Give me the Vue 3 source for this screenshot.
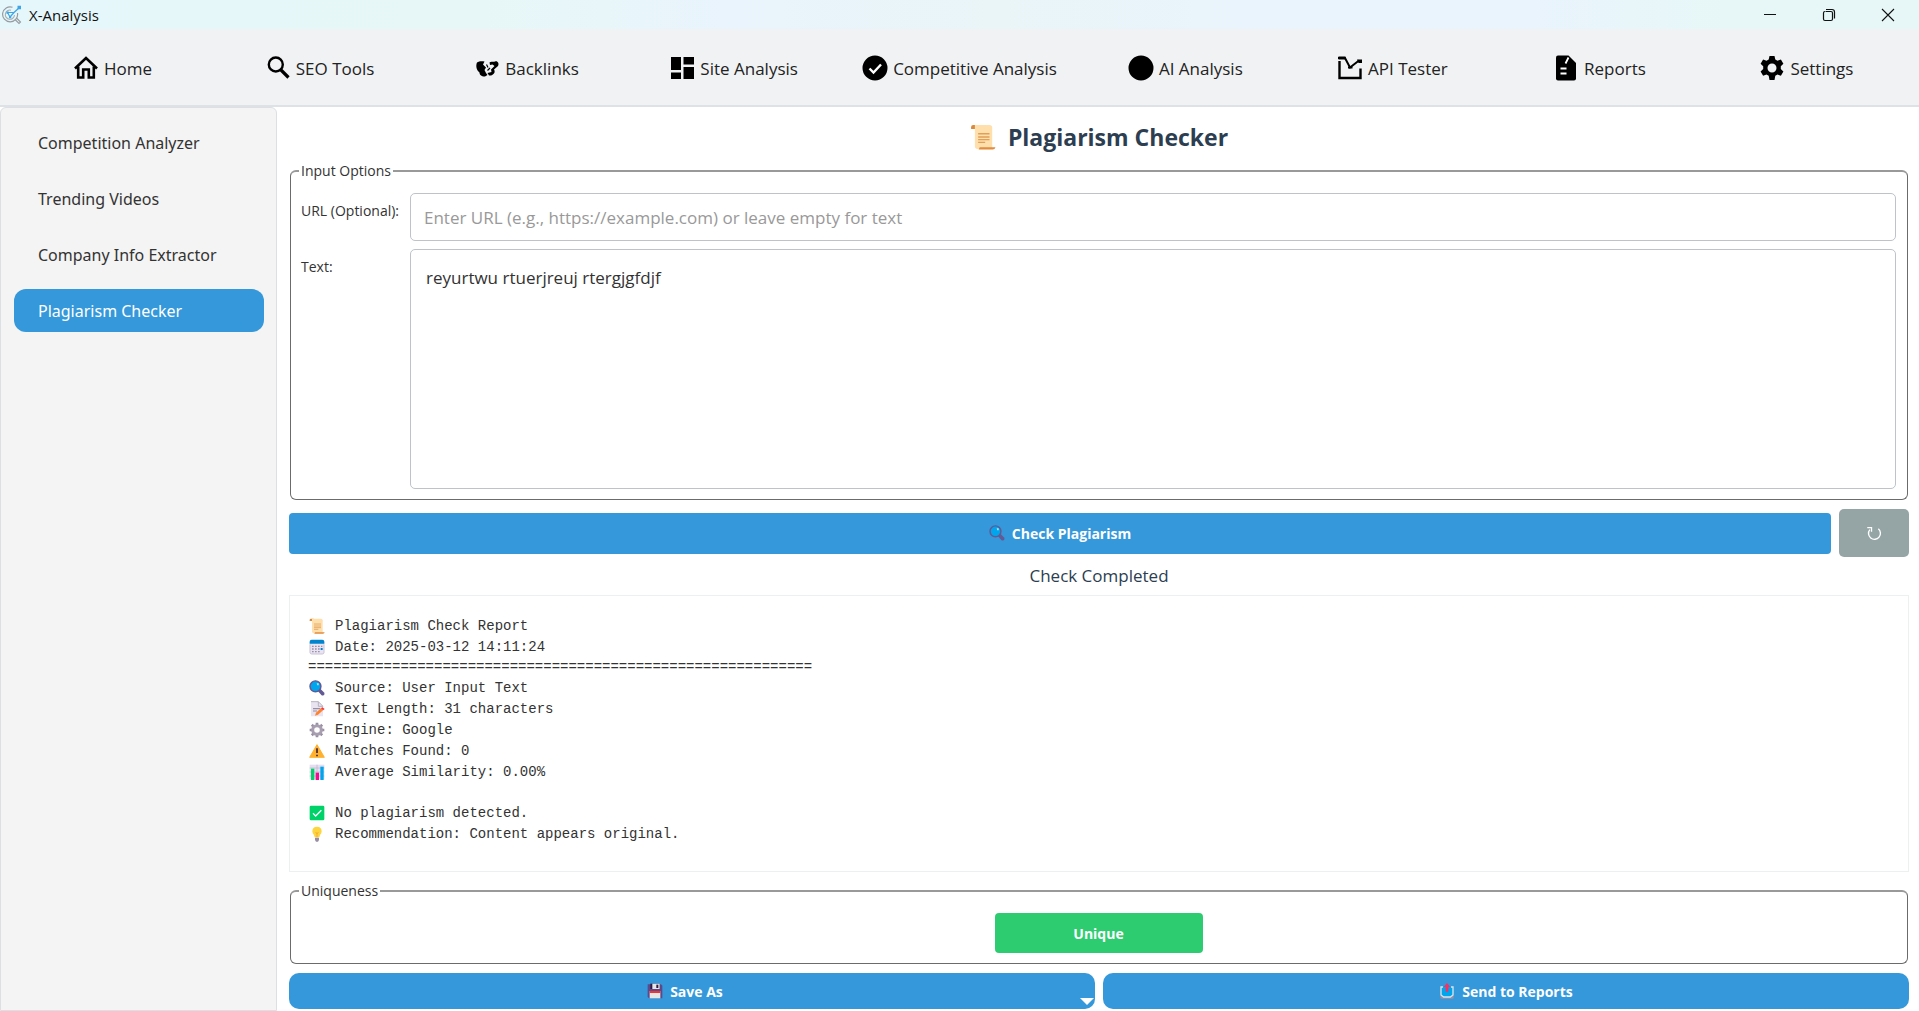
<script setup>
import { h, ref } from 'vue'

// Every glyph is a view box size and a list of painted paths.
const glyphs = {
  logo: [20, [
    { d: 'M15.500 8A7.500 7.500 0 1 1 10.500 2.200', s: '#969ca1', w: 1.200 },
    { d: 'M12.500 10A4.600 4.600 0 1 1 9 5.200', s: '#a9afb3', w: 1.100 },
    { d: 'M13 14.500L17 18.500L18.500 17L14.500 13', s: '#969ca1', w: 1.100 },
    { d: 'M5.500 7.500L8 12L12 7.500L17.500 2.500M5.500 7.500L12 7.500', s: '#3fa5e6', w: 1.200 },
    { d: 'M15.500 .8h3.500v3.500h-3.500zM4.500 6.500h2.200v2.200h-2.200zM7 11h2.200v2.200h-2.200z', f: '#3fa5e6' }
  ]],
  home: [26, [
    { d: 'M2 13.500 L13 3 L24 13.500', s: '#000', w: 2.6 },
    { d: 'M5.200 11.500V22.500H10.200V14.500H15.800V22.500H20.800V11.500', s: '#000', w: 2.6 }
  ]],
  search: [26, [
    { d: 'M17.800 9.500A7 7 0 1 1 3.800 9.500A7 7 0 1 1 17.800 9.500', s: '#000', w: 2.4 },
    { d: 'M15.500 14.500L23.500 22.500', s: '#000', w: 3.2 }
  ]],
  links: [26, [
    { d: 'M3 7.500C5 6 8 6 10.500 6.500L9 9.500L12 12.500L10.500 15L12 18L13.500 20L11 21.500C7 21.500 5.500 19.500 5.500 17.500C2.500 15 1.500 11 3 7.500Z', f: '#000' },
    { d: 'M15.500 7.500C17 6 19 7.500 21 6.500C23.500 5.500 25.500 8.500 24 11L20 14.500C22 17.500 19 21 15 20.500L13.500 18L17.500 17L17 14.500L20.500 11L18.500 9.500L16 10Z', f: '#000' },
    { d: 'M12.500 9.500L14 12.500M13.500 15.500L16 13', s: '#000', w: 1.2 }
  ]],
  grid: [26, [{ d: 'M2 2h10v13H2zM2 17.500h10v6.500H2zM14.500 2H25v7.500H14.500zM14.500 12H25v12H14.500z', f: '#000' }]],
  check: [26, [
    { d: 'M.5 13a12.500 12.500 0 1 0 25 0a12.500 12.500 0 1 0-25 0', f: '#000' },
    { d: 'M7.500 13.500L11.500 17.500L19 9.500', s: '#fff', w: 2.4 }
  ]],
  dot: [26, [{ d: 'M.5 13a12.500 12.500 0 1 0 25 0a12.500 12.500 0 1 0-25 0', f: '#000' }]],
  api: [26, [
    { d: 'M2.500 6V23H23.500V13.500', s: '#000', w: 2.4 },
    { d: 'M1 3H8L13 12.500L22 5.500', s: '#000', w: 2 },
    { d: 'M1.500 1.500h7v3h-7zM20 4.500h5v3.500h-3.500z', f: '#000' },
    { d: 'M11 12.500h4.500', s: '#000', w: 2 }
  ]],
  file: [26, [
    { d: 'M5 .5H15.500L23 8V23.500Q23 25.500 21 25.500H5Q3 25.500 3 23.500V2.500Q3 .5 5 .5Z', f: '#000' },
    { d: 'M15.500 2.500L12.500 8.500M7.500 13.500h6M7.500 18.500h6', s: '#fff', w: 1.800 }
  ]],
  gear: [26, [
    { d: 'M10.500 1h5l.8 3.400 2.200 1.300 3.400-1.200 2.500 4.300-2.600 2.500v2.600l2.600 2.500-2.500 4.300-3.400-1.200-2.200 1.300-.8 4.200h-5l-.8-4.200-2.200-1.300-3.400 1.200-2.500-4.300 2.600-2.500v-2.600l-2.600-2.500 2.500-4.300 3.400 1.200 2.200-1.300z', f: '#000' },
    { d: 'M8.500 13a4.500 4.500 0 1 0 9 0a4.500 4.500 0 1 0-9 0', f: '#f1f2f4' }
  ]],
  scroll: [24, [
    { d: 'M1 3Q1 1 3 1H7V4.500H1Z', f: '#d88a3c' },
    { d: 'M4.500 1H18Q20.500 1 20.500 3.500V23H7Q4.500 23 4.500 20Z', f: '#ffdfab' },
    { d: 'M9 21.500H23.500Q23 23.500 21 23.500H8Z', f: '#e38c3b' },
    { d: 'M7.500 9H18M7.500 12H18M7.500 14.500H18M7.500 17H14', s: '#e0a05a', w: 1.200 }
  ]],
  calendar: [24, [
    { d: 'M4 2H20Q23 2 23 5V20Q23 23 20 23H4Q1 23 1 20V5Q1 2 4 2Z', f: '#e9e3f2' },
    { d: 'M1.500 8V20Q1.500 22.500 4 22.500H20Q22.500 22.500 22.500 20V8', s: '#bdb4cc', w: 1 },
    { d: 'M4 1H20Q23 1 23 4V7H1V4Q1 1 4 1Z', f: '#0084ce' },
    { d: 'M4.500 10h2.500v2h-2.500zM9 10h2.500v2h-2.500zM13.500 10h2.500v2h-2.500zM18 10h2v2h-2zM4.500 14h2.500v2h-2.500zM9 14h2.500v2h-2.500zM13.500 14h2.500v2h-2.500zM4.500 18h2.500v2h-2.500zM9 18h2.500v2h-2.500zM13.500 18h2.500v2h-2.500z', f: '#9a90a8' },
    { d: 'M17.500 13.500h3v3h-3z', f: '#0084ce' }
  ]],
  lens: [24, [
    { d: 'M14 14L17 13L23 19Q24 21.500 22 23Q20 24 18.500 22.500L13.500 17Z', f: '#635994' },
    { d: 'M1.500 9.500a8.200 8.200 0 1 0 16.400 0a8.200 8.200 0 1 0-16.400 0', f: '#00a6ed', s: '#635994', w: 2.200 },
    { d: 'M11.500 5h3v3h-2z', f: '#b8e6fb' }
  ]],
  memo: [24, [
    { d: 'M3 1H14L21 8V23H3Z', f: '#e9e4f0' },
    { d: 'M3 1H14V8H21L14 1', s: '#b4acbc', w: 1.400 },
    { d: 'M6 11.500H17M6 15H12', s: '#998ea4', w: 1.800 },
    { d: 'M9 22L10.500 17.500L18 11L21 14L13.500 20.500Z', f: '#ff822d' },
    { d: 'M18 11L20 9.500L23.500 12L21 14Z', f: '#f8312f' }
  ]],
  cog: [24, [
    { d: 'M12 1V5M12 19V23M1 12H5M19 12H23M4.200 4.200L7 7M17 17L19.800 19.800M4.200 19.800L7 17M17 7L19.800 4.200', s: '#998ea4', w: 4 },
    { d: 'M5.500 12a6.500 6.500 0 1 0 13 0a6.500 6.500 0 1 0-13 0', s: '#a79fb0', w: 4.600 }
  ]],
  warning: [24, [
    { d: 'M12 2.500L23 21.500H1Z', f: '#ffb02e', s: '#ffb02e', w: 1.500 },
    { d: 'M12 8V15M12 17.500V19.800', s: '#321b41', w: 2.400 }
  ]],
  chart: [24, [
    { d: 'M1 1H23V23H1Z', f: '#e4def0' },
    { d: 'M1 6H23M1 12H23M1 18H23M12 1V23', s: '#bbb2cc', w: 1 },
    { d: 'M3 7H8V24H3Z', f: '#00d26a' },
    { d: 'M10 13H15V24H10Z', f: '#f70a8d' },
    { d: 'M17 4H22V24H17Z', f: '#00a6ed' }
  ]],
  tick: [24, [
    { d: 'M3 1H21Q23 1 23 3V21Q23 23 21 23H3Q1 23 1 21V3Q1 1 3 1Z', f: '#00d26a' },
    { d: 'M6 12.500L10 16.500L18.500 8', s: '#fff', w: 2 }
  ]],
  bulb: [24, [
    { d: 'M12 1Q19 1 19 8Q19 11 16.500 13.500L15.500 17H8.500L7.500 13.500Q5 11 5 8Q5 1 12 1Z', f: '#fcd53f' },
    { d: 'M10 9L12 12L14 9M12 12V17', s: '#f9a22b', w: 1.200 },
    { d: 'M9 17.500H15V21L13.500 23.500H10.500L9 21Z', f: '#998ea4' }
  ]],
  floppy: [24, [
    { d: 'M1 2H21L23 4V23H3L1 21Z', f: '#5a4a8c' },
    { d: 'M5 1H19V9H5Z', f: '#321b41' },
    { d: 'M8 1H19V9H8Z', f: '#e6e6e6' },
    { d: 'M14 2.500H17V7.500H14Z', f: '#321b41' },
    { d: 'M4 12H20V23H4Z', f: '#e6e6e6' },
    { d: 'M4 12H20V15H4Z', f: '#f8312f' }
  ]],
  outbox: [24, [
    { d: 'M2 18H22V22Q22 23.500 20.500 23.500H3.500Q2 23.500 2 22Z', f: '#998ea4' },
    { d: 'M6 6H3V18L7 21H17L21 18V6H18', f: '#00a6ed', s: '#d9e4ea', w: 2 },
    { d: 'M12 0L17 6H14V13H10V6H7Z', f: '#f92f60' }
  ]],
  reload: [20, [
    { d: 'M4.500 5.500A7 7 0 1 0 14.500 4.500', s: '#fff', w: 1.600 },
    { d: 'M1.500 3H6.500V8', s: '#fff', w: 1.500 }
  ]],
  minimize: [14, [{ d: 'M1 6.500H13', s: '#111', w: 1 }]],
  restore: [14, [
    { d: 'M3.500 3.500H9Q10.500 3.500 10.500 5V11Q10.500 12.500 9 12.500H3Q1.500 12.500 1.500 11V5Q1.500 3.500 3 3.500', s: '#111', w: 1.200 },
    { d: 'M4 1.500H10Q12.500 1.500 12.500 4V10.500', s: '#111', w: 1.200 }
  ]],
  close: [14, [{ d: 'M1 1L13 13M13 1L1 13', s: '#111', w: 1.100 }]]
}

const Glyph = ({ name }) => {
  const [size, paths] = glyphs[name]
  return h('svg', { viewBox: `0 0 ${size} ${size}`, 'aria-hidden': 'true' },
    paths.map(p => h('path', { d: p.d, fill: p.f || 'none', stroke: p.s || 'none', 'stroke-width': p.w })))
}
Glyph.props = ['name']

const nav = [
  { icon: 'home', label: 'Home' },
  { icon: 'search', label: 'SEO Tools' },
  { icon: 'links', label: 'Backlinks' },
  { icon: 'grid', label: 'Site Analysis' },
  { icon: 'check', label: 'Competitive Analysis' },
  { icon: 'dot', label: 'AI Analysis' },
  { icon: 'api', label: 'API Tester' },
  { icon: 'file', label: 'Reports' },
  { icon: 'gear', label: 'Settings' }
]

const tools = ['Competition Analyzer', 'Trending Videos', 'Company Info Extractor', 'Plagiarism Checker']
const activeTool = ref('Plagiarism Checker')

const url = ref('')
const text = ref('reyurtwu rtuerjreuj rtergjgfdjf')

const report = [
  { icon: 'scroll', text: 'Plagiarism Check Report' },
  { icon: 'calendar', text: 'Date: 2025-03-12 14:11:24' },
  { text: '='.repeat(60) },
  { icon: 'lens', text: 'Source: User Input Text' },
  { icon: 'memo', text: 'Text Length: 31 characters' },
  { icon: 'cog', text: 'Engine: Google' },
  { icon: 'warning', text: 'Matches Found: 0' },
  { icon: 'chart', text: 'Average Similarity: 0.00%' },
  { text: '' },
  { icon: 'tick', text: 'No plagiarism detected.' },
  { icon: 'bulb', text: 'Recommendation: Content appears original.' }
]
</script>

<template>
  <div class="window">
    <header class="titlebar">
      <Glyph name="logo" class="logo" />
      <span class="app-name">X-Analysis</span>
      <button v-for="c in ['minimize', 'restore', 'close']" :key="c" class="control" :aria-label="c">
        <Glyph :name="c" class="control-icon" />
      </button>
    </header>

    <nav class="nav">
      <button v-for="item in nav" :key="item.label" class="nav-item">
        <Glyph :name="item.icon" class="nav-icon" />
        <span>{{ item.label }}</span>
      </button>
    </nav>

    <div class="body">
      <aside class="sidebar">
        <button
          v-for="tool in tools"
          :key="tool"
          class="tool"
          :class="{ active: tool === activeTool }"
          @click="activeTool = tool"
        >{{ tool }}</button>
      </aside>

      <main class="main">
        <h1 class="heading"><Glyph name="scroll" class="heading-icon" />Plagiarism Checker</h1>

        <fieldset class="group">
          <legend>Input Options</legend>
          <div class="form">
            <label for="url">URL (Optional):</label>
            <input id="url" v-model="url" type="text" placeholder="Enter URL (e.g., https://example.com) or leave empty for text">
            <label for="text">Text:</label>
            <textarea id="text" v-model="text" spellcheck="false"></textarea>
          </div>
        </fieldset>

        <div class="check-row">
          <button class="button check"><Glyph name="lens" class="emoji" />Check Plagiarism</button>
          <button class="refresh" aria-label="Reset"><Glyph name="reload" class="reload" /></button>
        </div>

        <p class="status">Check Completed</p>

        <section class="report">
          <div v-for="(line, i) in report" :key="i" class="line" :class="{ plain: !line.icon }">
            <Glyph v-if="line.icon" :name="line.icon" class="line-icon" />
            <span>{{ line.text }}</span>
          </div>
        </section>

        <fieldset class="group">
          <legend>Uniqueness</legend>
          <button class="button unique">Unique</button>
        </fieldset>

        <div class="actions">
          <button class="button action has-menu"><Glyph name="floppy" class="emoji" />Save As<i class="arrow"></i></button>
          <button class="button action"><Glyph name="outbox" class="emoji" />Send to Reports</button>
        </div>
      </main>
    </div>
  </div>
</template>

<style>
body {
  margin: 0;
  background: #fff;
}
</style>

<style scoped>
* {
  box-sizing: border-box;
}

button,
input,
textarea {
  font-family: inherit;
  border: 0;
}

.window {
  display: flex;
  flex-direction: column;
  min-height: 100vh;
  font-family: "Open Sans", "Noto Sans", sans-serif;
  color: #333;
}

.titlebar {
  display: flex;
  align-items: center;
  height: 29px;
  padding: 0 2px;
  background: linear-gradient(90deg, #e5f7fb, #e7f7f7 25%, #e9f4fc 38%, #e9f5f7 52%, #e9f4fc 65%, #e9f4fc 80%, #e7f7f7 90%, #e7f7f7);
}

.logo {
  width: 20px;
  height: 20px;
}

.app-name {
  flex: 1;
  margin-left: 7px;
  font-size: 15px;
  line-height: 20px;
  color: #111;
}

.control {
  display: flex;
  align-items: center;
  justify-content: center;
  width: 59px;
  height: 29px;
  padding: 0;
  background: none;
}

.control-icon {
  width: 14px;
  height: 14px;
}

.nav {
  display: flex;
  height: 78px;
  padding: 2px 9px 0;
  background: #f1f2f4;
  border-bottom: 2px solid #dee1e5;
}

.nav-item {
  display: flex;
  flex: 1 1 0;
  align-items: center;
  justify-content: center;
  gap: 5px;
  padding: 0 25px;
  background: none;
  font-size: 17px;
  color: #222;
  white-space: nowrap;
}

.nav-icon {
  flex: none;
  width: 26px;
  height: 26px;
}

.body {
  display: flex;
  flex: 1;
}

.sidebar {
  display: flex;
  flex: none;
  flex-direction: column;
  gap: 13px;
  width: 277px;
  padding: 13px 12px 13px 13px;
  background: #f4f4f4;
  border: 1px solid #dcdfe3;
  border-radius: 6px 6px 0 0;
}

.tool {
  height: 43px;
  padding: 0 24px;
  background: none;
  border-radius: 12px;
  font-family: "Noto Sans", sans-serif;
  font-size: 16px;
  color: #333;
  text-align: left;
}

.tool.active {
  background: #3498db;
  color: #fff;
}

.main {
  display: flex;
  flex: 1;
  flex-direction: column;
  gap: 9px;
  padding: 15px 10px 2px 12px;
}

.heading {
  display: flex;
  align-items: center;
  justify-content: center;
  gap: 12px;
  margin: 0;
  font-size: 23px;
  line-height: 30px;
  font-weight: 700;
  color: #2c3e50;
}

.heading-icon {
  width: 26px;
  height: 26px;
}

.group {
  min-width: 0;
  margin: 0 1px;
  padding: 12px 11px 10px 10px;
  border: 1px solid #6b6b6b;
  border-top: 2px solid #999;
  border-radius: 6px;
  font-size: 14px;
  line-height: 20px;
}

.group legend {
  margin-left: -2px;
  padding: 0 2px;
}

.form {
  display: grid;
  grid-template-columns: minmax(101px, auto) 1fr;
  gap: 8px;
}

.form label {
  padding-top: 8px;
}

.form input,
.form textarea {
  width: 100%;
  border: 1px solid #bdc3c7;
  border-radius: 5px;
  background: #fff;
  font-size: 17px;
  color: #333;
  outline: none;
}

.form input {
  height: 48px;
  padding: 0 13px;
}

.form input::placeholder {
  color: #999;
}

.form textarea {
  display: block;
  height: 240px;
  padding: 16px 15px;
  line-height: 24px;
  resize: none;
}

.button {
  display: flex;
  align-items: center;
  justify-content: center;
  gap: 7px;
  padding: 0;
  background: #3498db;
  font-size: 14px;
  font-weight: 700;
  color: #fff;
}

.emoji {
  width: 16px;
  height: 16px;
}

.check-row {
  display: flex;
  align-items: center;
  gap: 8px;
}

.check {
  flex: 1;
  height: 41px;
  border-radius: 4px;
}

.refresh {
  display: flex;
  align-items: center;
  justify-content: center;
  width: 70px;
  height: 48px;
  padding: 0;
  background: #95a5a6;
  border-radius: 5px;
}

.reload {
  width: 17px;
  height: 17px;
}

.status {
  margin: 0;
  font-size: 17px;
  line-height: 20px;
  color: #2c3e50;
  text-align: center;
}

.report {
  flex: 1;
  padding: 19px 18px;
  border: 1px solid #ecf0f1;
  font-family: "Liberation Mono", monospace;
  font-size: 14px;
}

.line {
  display: flex;
  align-items: center;
  gap: 10px;
  height: 21px;
  white-space: pre;
}

.line.plain {
  height: 20px;
}

.line-icon {
  width: 16px;
  height: 16px;
  margin-left: 1px;
}

.unique {
  width: 208px;
  height: 40px;
  margin: 0 auto;
  background: #2ecc71;
  border-radius: 4px;
}

.actions {
  display: grid;
  grid-template-columns: 1fr 1fr;
  gap: 8px;
}

.action {
  position: relative;
  height: 36px;
  border-radius: 10px;
}

.has-menu {
  padding-right: 14px;
}

.arrow {
  position: absolute;
  right: 1px;
  bottom: 4px;
  border: 7px solid transparent;
  border-top-color: #fff;
  border-bottom: 0;
}
</style>
